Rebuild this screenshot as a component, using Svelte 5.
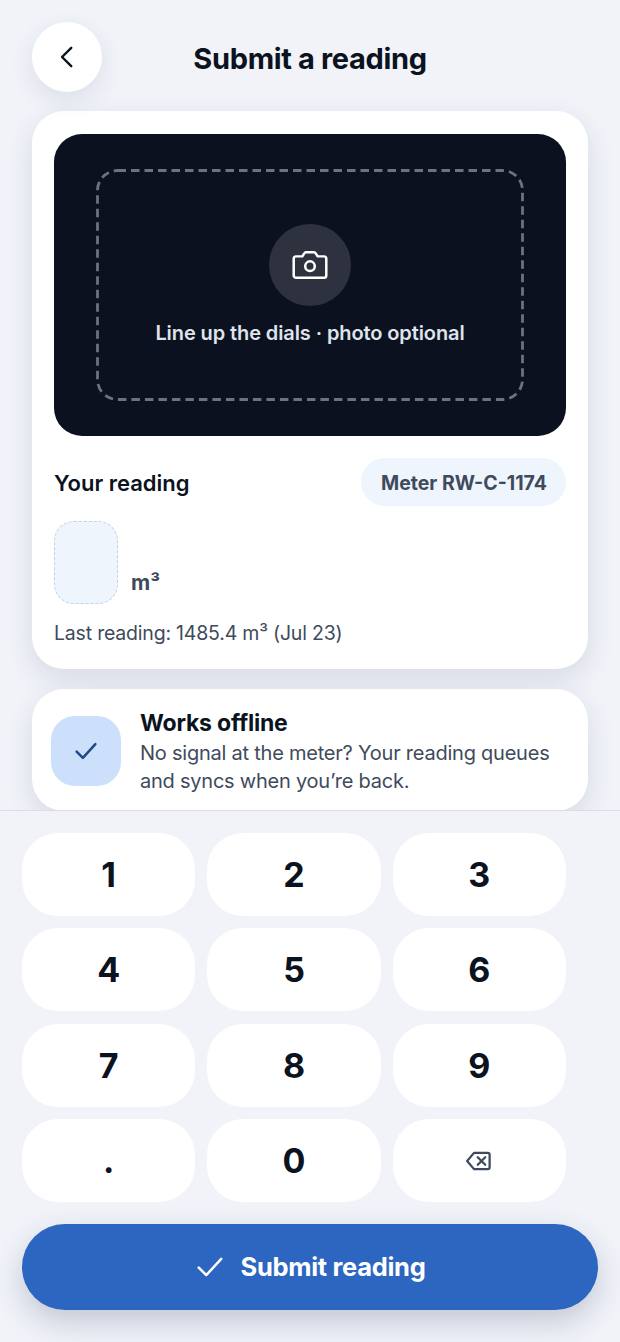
<script>
  const keys = ['1','2','3','4','5','6','7','8','9','.','0'];
</script>

<div class="page">
  <div class="scroll">
    <header class="top">
      <button class="back" aria-label="Back">
        <svg width="34" height="34" viewBox="0 0 24 24" fill="none" stroke="#0b1220" stroke-width="1.700" stroke-linecap="round" stroke-linejoin="round"><path d="M15 5.500 8.500 12l6.500 6.500"/></svg>
      </button>
      <h1>Submit a reading</h1>
    </header>

    <section class="card main">
      <div class="viewfinder">
        <div class="frame">
          <svg class="dash" width="428" height="232" viewBox="0 0 428 232" fill="none" aria-hidden="true"><rect x="1.500" y="1.500" width="425" height="229" rx="20" stroke="#6b7280" stroke-width="2.800" stroke-dasharray="8.500 5"/></svg>
          <div class="cam">
            <svg width="46" height="46" viewBox="0 0 24 24" fill="none" stroke="#fff" stroke-width="1.300" stroke-linecap="round" stroke-linejoin="round"><path d="M4.700 7.500H8l1.100-1.700a1 1 0 0 1 .8-.5h4.200a1 1 0 0 1 .8.5L16 7.500h3.300a1.200 1.200 0 0 1 1.200 1.200v8.800a1.200 1.200 0 0 1-1.200 1.200H4.700a1.200 1.200 0 0 1-1.200-1.200V8.700a1.200 1.200 0 0 1 1.200-1.200z"/><circle cx="12" cy="12.600" r="2.500"/></svg>
          </div>
          <p class="hint">Line up the dials · photo optional</p>
        </div>
      </div>
      <div class="rowhead">
        <span class="label">Your reading</span>
        <span class="chip">Meter RW-C-1174</span>
      </div>
      <div class="entry">
        <div class="slot"></div>
        <span class="unit">m³</span>
      </div>
      <p class="last">Last reading: 1485.4 m³ (Jul 23)</p>
    </section>

    <section class="card offline">
      <div class="ok">
        <svg width="30" height="30" viewBox="0 0 24 24" fill="none" stroke="#1e4a86" stroke-width="2" stroke-linecap="round" stroke-linejoin="round"><path d="M4.500 12.500 9.500 17.500 19.500 6.500"/></svg>
      </div>
      <div class="otext">
        <strong>Works offline</strong>
        <p>No signal at the meter? Your reading queues and syncs when you’re back.</p>
      </div>
    </section>
  </div>

  <div class="panel">
    <div class="pad">
      {#each keys as k}
        <button class="key">{k}</button>
      {/each}
      <button class="key" aria-label="Delete">
        <svg width="30" height="30" viewBox="0 0 24 24" fill="none" stroke="#3f4a5c" stroke-width="1.800" stroke-linecap="round" stroke-linejoin="round"><path d="M8 5.500h11a1.500 1.500 0 0 1 1.500 1.500v10a1.500 1.500 0 0 1-1.500 1.500H8L2.500 12z"/><path d="m11 9 6 6M17 9l-6 6"/></svg>
      </button>
    </div>
    <button class="submit">
      <svg width="30" height="30" viewBox="0 0 24 24" fill="none" stroke="#fff" stroke-width="2" stroke-linecap="round" stroke-linejoin="round"><path d="M3 12.500 9 18.500 21 5.500"/></svg>
      <span>Submit reading</span>
    </button>
  </div>
</div>

<style>
  :global(body) {
    margin: 0;
    background: #f1f3f9;
  }
  .page {
    width: 620px;
    height: 1342px;
    overflow: hidden;
    background: #f1f3f9;
    font-family: Inter, "Noto Sans", sans-serif;
    color: #0b1220;
    display: flex;
    flex-direction: column;
  }
  button {
    font: inherit;
    border: none;
    padding: 0;
    color: inherit;
  }
  .scroll {
    height: 810px;
    flex: none;
    overflow: hidden;
    padding: 22px 32px 0;
    box-sizing: border-box;
  }
  .top {
    position: relative;
    height: 70px;
    display: flex;
    align-items: center;
    justify-content: center;
    margin-bottom: 19px;
  }
  .back {
    position: absolute;
    left: 0;
    top: 0;
    width: 70px;
    height: 70px;
    border-radius: 50%;
    background: #fff;
    box-shadow: 0 8px 24px rgba(30, 45, 80, 0.1);
    display: flex;
    align-items: center;
    justify-content: center;
  }
  h1 {
    margin: 2px 0 0;
    font-size: 29px;
    font-weight: 700;
    letter-spacing: -0.35px;
  }
  .card {
    background: #fff;
    border-radius: 32px;
    box-shadow: 0 10px 28px rgba(30, 45, 80, 0.12);
  }
  .main {
    padding: 23px 22px 20px;
    height: 558px;
    box-sizing: border-box;
    margin-bottom: 20px;
  }
  .viewfinder {
    height: 302px;
    border-radius: 28px;
    background: #0b111f;
    padding: 35px 42px 35px;
    box-sizing: border-box;
  }
  .frame {
    position: relative;
    height: 100%;
    padding-bottom: 2px;
    box-sizing: border-box;
    display: flex;
    flex-direction: column;
    align-items: center;
    justify-content: center;
  }
  .dash {
    position: absolute;
    left: 0;
    top: 0;
  }
  .cam {
    width: 82px;
    height: 82px;
    border-radius: 50%;
    background: #2e323f;
    display: flex;
    align-items: center;
    justify-content: center;
  }
  .hint {
    margin: 16px 0 0;
    font-size: 20px;
    line-height: 23px;
    font-weight: 600;
    color: #dfe3ec;
    letter-spacing: -0.1px;
  }
  .rowhead {
    margin-top: 22px;
    display: flex;
    align-items: center;
    justify-content: space-between;
  }
  .label {
    font-size: 22px;
    font-weight: 600;
    position: relative;
    top: 1px;
  }
  .chip {
    height: 48px;
    padding: 1px 19px 0 20px;
    box-sizing: border-box;
    border-radius: 24px;
    background: #eef5fd;
    color: #3f4a5c;
    font-size: 19.500px;
    font-weight: 700;
    display: flex;
    align-items: center;
  }
  .entry {
    margin-top: 15px;
    display: flex;
    align-items: flex-end;
    gap: 13px;
  }
  .slot {
    width: 64px;
    height: 83px;
    box-sizing: border-box;
    border: 1.500px dashed #bfd2e6;
    border-radius: 20px;
    background: #eef5fd;
  }
  .unit {
    font-size: 21px;
    font-weight: 700;
    color: #3f4a5c;
    line-height: 26px;
    margin-bottom: 8px;
  }
  .last {
    margin: 17px 0 0;
    font-size: 19.500px;
    color: #3f4a5c;
    letter-spacing: -0.2px;
  }
  .offline {
    height: 122px;
    padding: 27px 19px;
    box-sizing: border-box;
    display: flex;
    gap: 19px;
    align-items: flex-start;
  }
  .ok {
    flex: none;
    width: 70px;
    height: 70px;
    border-radius: 24px;
    background: #cde0fb;
    display: flex;
    align-items: center;
    justify-content: center;
  }
  .otext {
    margin-top: -7px;
  }
  .otext strong {
    display: block;
    font-size: 23px;
    font-weight: 700;
    line-height: 28px;
    letter-spacing: -0.2px;
  }
  .otext p {
    margin: 2px 0 0;
    font-size: 20px;
    line-height: 28px;
    color: #3f4a5c;
    letter-spacing: -0.23px;
  }
  .panel {
    flex: 1;
    border-top: 1px solid #d9dde5;
    background: #f1f3f9;
    padding: 22px 22px 0;
    position: relative;
  }
  .pad {
    width: 544px;
    display: grid;
    grid-template-columns: repeat(3, 1fr);
    grid-auto-rows: 83px;
    gap: 12.400px 12px;
  }
  .key {
    background: #fff;
    border-radius: 36px;
    font-size: 34px;
    font-weight: 700;
    color: #0b1220;
    display: flex;
    align-items: center;
    justify-content: center;
  }
  .submit {
    margin-top: 21.800px;
    width: 576px;
    height: 86px;
    border-radius: 43px;
    background: #2c66c0;
    color: #fff;
    font-size: 25.500px;
    font-weight: 700;
    letter-spacing: -0.3px;
    display: flex;
    align-items: center;
    justify-content: center;
    gap: 16px;
    box-shadow: 0 12px 30px rgba(30, 45, 80, 0.22);
  }
</style>
